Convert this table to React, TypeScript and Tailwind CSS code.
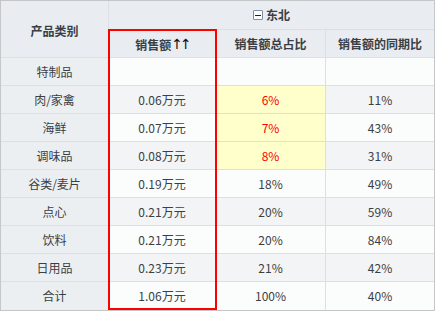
import React from 'react';

const rows = [
  { name: '特制品', sales: '', share: '', yoy: '', hot: false },
  { name: '肉/家禽', sales: '0.06万元', share: '6%', yoy: '11%', hot: true },
  { name: '海鲜', sales: '0.07万元', share: '7%', yoy: '43%', hot: true },
  { name: '调味品', sales: '0.08万元', share: '8%', yoy: '31%', hot: true },
  { name: '谷类/麦片', sales: '0.19万元', share: '18%', yoy: '49%', hot: false },
  { name: '点心', sales: '0.21万元', share: '20%', yoy: '59%', hot: false },
  { name: '饮料', sales: '0.21万元', share: '20%', yoy: '84%', hot: false },
  { name: '日用品', sales: '0.23万元', share: '21%', yoy: '42%', hot: false },
  { name: '合计', sales: '1.06万元', share: '100%', yoy: '40%', hot: false },
];

const App = () => {
  return (
    <div
      className="relative w-[435px] h-[311px] border border-[#c4c6c8] bg-white text-[12px] text-[#3a3f45]"
      style={{ fontFamily: '"Noto Sans CJK SC", "Noto Sans", sans-serif' }}
    >
      <div className="grid grid-cols-[108px_107px_110px_108px] grid-rows-[29px_28px_repeat(9,28px)]">
        {/* Header */}
        <div className="row-span-2 flex items-center justify-center pt-[4px] bg-[#e9ecf0] border-r border-b border-[#dce0e4] font-bold">
          产品类别
        </div>
        <div className="col-span-3 flex items-center justify-center bg-[#e9ecf0] border-b border-[#dce0e4] font-bold">
          <span className="mr-[3px] flex h-[10px] w-[10px] items-center justify-center rounded-[1px] border border-[#7d8fa6] bg-white">
            <span className="block h-[1px] w-[6px] bg-[#222]" />
          </span>
          东北
        </div>
        <div className="flex items-center justify-center pt-[3px] bg-[#e9ecf0] border-r border-b border-[#dce0e4] font-bold">
          销售额
          <span className="mb-[3px] font-['DejaVu_Sans',sans-serif] text-[14px] font-normal leading-none tracking-[-3px] text-[#111]">
            ↑↑
          </span>
        </div>
        <div className="flex items-center justify-center bg-[#e9ecf0] border-r border-b border-[#dce0e4] font-bold">
          销售额总占比
        </div>
        <div className="flex items-center justify-center bg-[#e9ecf0] border-b border-[#dce0e4] font-bold">
          销售额的同期比
        </div>

        {/* Body */}
        {rows.map((r, i) => {
          const last = i === rows.length - 1;
          const bg = i % 2 === 0 ? 'bg-[#fbfcfc]' : 'bg-[#f2f4f6]';
          const bb = last ? '' : 'border-b';
          return (
            <React.Fragment key={r.name}>
              <div className={`flex items-center justify-center bg-[#eceff2] border-r border-[#dce0e4] ${bb}`}>
                {r.name}
              </div>
              <div className={`flex items-center justify-center border-r border-[#dce0e4] ${bg} ${bb}`}>
                {r.sales}
              </div>
              <div
                className={`flex items-center justify-center border-r border-[#dce0e4] ${bb} ${
                  r.hot ? 'bg-[#ffffcc] text-[#ff0000]' : bg
                }`}
              >
                {r.share}
              </div>
              <div className={`flex items-center justify-center border-[#dce0e4] ${bg} ${bb}`}>
                {r.yoy}
              </div>
            </React.Fragment>
          );
        })}
      </div>

      {/* selected column highlight */}
      <div className="pointer-events-none absolute left-[107px] top-[28px] h-[281px] w-[109px] border-2 border-[#ff0000]" />
    </div>
  );
};

export default App;
